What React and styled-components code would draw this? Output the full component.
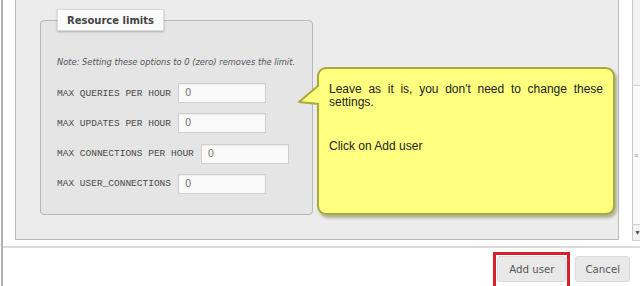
import React from 'react'
import styled, { createGlobalStyle } from 'styled-components'

const GlobalStyle = createGlobalStyle`
  html, body {
    margin: 0;
    padding: 0;
    background: #fff;
    overflow: hidden;
  }
`

const Page = styled.div`
  position: relative;
  width: 640px;
  height: 286px;
  padding-left: 1px;
  box-sizing: border-box;
  overflow: hidden;
`

const Dialog = styled.div`
  display: flex;
  flex-direction: column;
  height: 100%;
  border-left: 2px solid #b4b4b4;
  background: #fff;
`

const ScrollArea = styled.div`
  display: flex;
  height: 246px;
  flex-shrink: 0;
`

const Content = styled.div`
  flex: 1;
  padding: 0 13px 0 12px;
`

const Panel = styled.div`
  background: #ececec;
  border: 1px solid #b9b9b9;
  border-top: none;
  padding: 9px 0 24px 24px;
`

const Fieldset = styled.fieldset`
  width: 273px;
  box-sizing: border-box;
  margin: 0;
  padding: 0 16px 20px 16px;
  background: #e5e5e5;
  border: 1px solid #b8b8b8;
  border-radius: 4px;
  min-inline-size: 0;
`

const Legend = styled.legend`
  height: 22px;
  line-height: 22px;
  padding: 0 9px;
  background: #fbfbfb;
  border: 1px solid #dcdcdc;
  box-shadow: 0 1px 2px rgba(0, 0, 0, 0.25);
  font-family: 'DejaVu Sans', Verdana, sans-serif;
  font-weight: bold;
  font-size: 10px;
  color: #444;
  box-sizing: border-box;
`

const Note = styled.p`
  margin: 26px 0 16px;
  font-family: 'DejaVu Sans', Verdana, sans-serif;
  font-style: italic;
  font-size: 8.3px;
  line-height: 10px;
  color: #555;
  white-space: nowrap;
`

const Rows = styled.div`
  display: flex;
  flex-direction: column;
  gap: 10.3px;
`

const Row = styled.div`
  display: flex;
  align-items: center;
  height: 20px;
`

const Label = styled.span`
  font-family: 'Liberation Mono', 'Courier New', monospace;
  font-size: 9.5px;
  color: #4a4a4a;
  margin-right: 7px;
  white-space: nowrap;
`

const Input = styled.div`
  width: 88px;
  height: 20px;
  box-sizing: border-box;
  border: 1px solid #cfcfcf;
  background: #fafafa;
  box-shadow: inset 0 1px 1px rgba(0, 0, 0, 0.06);
  padding: 0 6px;
  font-family: 'DejaVu Sans', Verdana, sans-serif;
  font-size: 10px;
  line-height: 18px;
  color: #777;
`

const Scrollbar = styled.div`
  width: 8px;
  height: 241px;
  display: flex;
  flex-direction: column;
  border-left: 1px solid #c9c9c9;
  background: #f3f3f3;
  box-sizing: border-box;
`

const Track = styled.div`
  height: 85px;
`

const Thumb = styled.div`
  flex: 1;
  display: flex;
  align-items: center;
  border-top: 1px solid #cfcfcf;
  border-bottom: 1px solid #cfcfcf;
  background: #fbfbfb;
  font-size: 8px;
  color: #999;
  padding-left: 1px;
  overflow: hidden;
`

const Arrow = styled.div`
  height: 15px;
  display: flex;
  align-items: center;
  padding-left: 1px;
  font-size: 7px;
  color: #555;
  border-bottom: 1px solid #cfcfcf;
`

const Footer = styled.div`
  flex: 1;
  display: flex;
  justify-content: flex-end;
  align-items: flex-start;
  gap: 9px;
  padding: 8px 10px 0 0;
  border-top: 2px solid #dcdcdc;
`

const ButtonWrap = styled.div`
  position: relative;
`

const Button = styled.button`
  height: 26px;
  padding: 0 ${({ $pad }) => $pad}px;
  background: #e9e9e9;
  border: 1px solid #dadada;
  border-radius: 3px;
  font-family: 'DejaVu Sans', Verdana, sans-serif;
  font-size: 10.2px;
  color: #555;
`

const Highlight = styled.div`
  position: absolute;
  left: -4px;
  right: -4px;
  top: -4px;
  bottom: -10px;
  border: 3px solid #d7202c;
  pointer-events: none;
`

const Callout = styled.div`
  position: absolute;
  left: 317px;
  top: 67px;
  width: 298px;
  height: 148px;
  box-sizing: border-box;
  padding: 14px 10px 0;
  background: #ffff80;
  border: 2px solid #a9a93c;
  border-radius: 9px;
  box-shadow: 2px 3px 3px rgba(60, 60, 0, 0.35);
  font-family: 'Liberation Sans', Arial, sans-serif;
  font-size: 12px;
  line-height: 13.4px;
  color: #222;
`

const Pointer = styled.svg`
  position: absolute;
  left: -21px;
  top: 15px;
`

const CalloutText = styled.p`
  margin: ${({ $gap }) => $gap}px 0 0;
  text-align: justify;
`

const limits = [
  'MAX QUERIES PER HOUR',
  'MAX UPDATES PER HOUR',
  'MAX CONNECTIONS PER HOUR',
  'MAX USER_CONNECTIONS'
]

export default function App() {
  return (
    <Page>
      <GlobalStyle />
      <Dialog>
        <ScrollArea>
          <Content>
            <Panel>
              <Fieldset>
                <Legend>Resource limits</Legend>
                <Note>Note: Setting these options to 0 (zero) removes the limit.</Note>
                <Rows>
                  {limits.map(name => (
                    <Row key={name}>
                      <Label>{name}</Label>
                      <Input>0</Input>
                    </Row>
                  ))}
                </Rows>
              </Fieldset>
            </Panel>
          </Content>
          <Scrollbar>
            <Track />
            <Thumb>≡</Thumb>
            <Arrow>▼</Arrow>
          </Scrollbar>
        </ScrollArea>
        <Footer>
          <ButtonWrap>
            <Button $pad={11}>Add user</Button>
            <Highlight />
          </ButtonWrap>
          <Button $pad={9}>Cancel</Button>
        </Footer>
      </Dialog>

      <Callout>
        <Pointer width="24" height="24" viewBox="0 0 24 24">
          <polygon points="1,18 21,1 24,1 24,21 21,21" fill="#ffff80" />
          <polyline points="21,1 1,18 21,20" fill="none" stroke="#a9a93c" strokeWidth="2" strokeLinejoin="round" />
        </Pointer>
        <CalloutText $gap={0}>Leave as it is, you don't need to change these settings.</CalloutText>
        <CalloutText $gap={30}>Click on Add user</CalloutText>
      </Callout>
    </Page>
  )
}
